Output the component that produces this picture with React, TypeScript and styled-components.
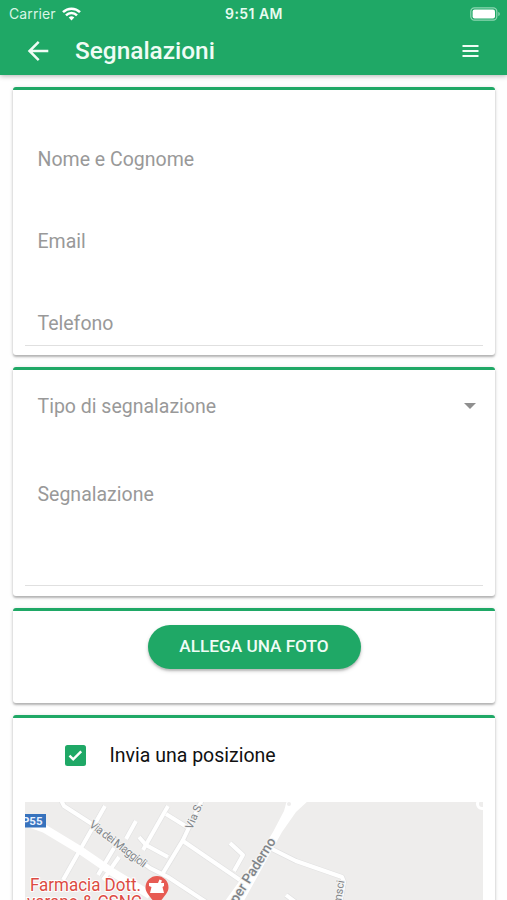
import React from 'react';
import styled, { createGlobalStyle } from 'styled-components';

const GREEN = '#1fa866';

const GlobalStyle = createGlobalStyle`
  * { box-sizing: border-box; }
  html, body { margin: 0; background: #fefefe; }
  body { height: 900px; overflow: hidden; font-family: Roboto, sans-serif; }
`;

const Screen = styled.div`
  width: 507px;
  height: 900px;
  overflow: hidden;
  display: flex;
  flex-direction: column;
`;

const Header = styled.header`
  flex: none;
  height: 75px;
  background: ${GREEN};
  color: #fff;
  box-shadow: 0 1px 5px rgba(0, 0, 0, 0.3);
`;

const StatusBar = styled.div`
  height: 27px;
  display: grid;
  grid-template-columns: 1fr auto 1fr;
  align-items: center;
  padding: 0 7px 0 9px;
  font-family: Inter, sans-serif;
  font-size: 14px;
  line-height: 27px;
`;

const Carrier = styled.div`
  display: flex;
  align-items: center;
  gap: 6px;
  color: #d8f5e5;
  letter-spacing: 0.1px;
`;

const Clock = styled.div`
  font-weight: 600;
  font-size: 14px;
  letter-spacing: 0.45px;
  padding-right: 1px;
  color: #e8fbf0;
`;

const BatteryIcon = styled.svg`
  justify-self: end;
  display: block;
`;

const Toolbar = styled.div`
  height: 48px;
  display: flex;
  align-items: center;
  padding: 0 28px 0 27px;
`;

const Title = styled.h1`
  flex: 1;
  margin: 0 0 0 26px;
  font-size: 24.4px;
  line-height: 30px;
  font-weight: 500;
  color: #effcf5;
`;

const IconButton = styled.button`
  display: flex;
  padding: 0;
  border: 0;
  background: none;
  color: #effcf5;
`;

const Content = styled.main`
  padding: 12px 12px 0 13px;
  display: flex;
  flex-direction: column;
  gap: 12px;
`;

const Card = styled.section<{ $height: number }>`
  flex: none;
  height: ${(p) => p.$height}px;
  background: #fff;
  border-top: 3px solid ${GREEN};
  border-radius: 3px;
  padding: 0 12px;
  box-shadow: 0 2px 2px rgba(0, 0, 0, 0.22), 0 1px 4px rgba(0, 0, 0, 0.14);
`;

const Field = styled.label<{ $height: number; $top: number; $line?: boolean }>`
  display: flex;
  justify-content: space-between;
  height: ${(p) => p.$height}px;
  padding: ${(p) => p.$top}px 7px 0 12.5px;
  border-bottom: ${(p) => (p.$line ? '1px solid #e0e0e0' : '0')};
  font-size: 19.5px;
  line-height: 24px;
  color: #999;
`;

const Caret = styled.span`
  margin-top: 8px;
  width: 0;
  height: 0;
  border: 6px solid transparent;
  border-top-color: #8f8f8f;
  border-bottom: 0;
`;

const Actions = styled.div`
  display: flex;
  justify-content: center;
  padding-top: 14px;
`;

const PillButton = styled.button`
  width: 213px;
  height: 44px;
  padding: 0 0 1px;
  border: 0;
  border-radius: 22px;
  background: ${GREEN};
  color: #effcf5;
  font: 500 17.2px/43px Roboto, sans-serif;
  box-shadow: 0 2px 2px rgba(0, 0, 0, 0.16), 0 2px 4px rgba(0, 0, 0, 0.16);
`;

const CheckRow = styled.label`
  height: 84px;
  display: flex;
  align-items: center;
  gap: 24px;
  padding: 0 0 9px 40px;
  font-size: 19.5px;
  color: #111;
`;

const CheckBox = styled.span`
  width: 20.5px;
  height: 20.5px;
  border-radius: 2.5px;
  background: ${GREEN};
  display: flex;
`;

const MapView = styled.svg`
  display: block;
  background: #eeedec;
`;

const thinRoads = [
  'M61 800L64 806L92 824L150 868L168 877L206 902',
  'M105 806L80 850L63 880',
  'M136 821L126 839',
  'M168 806L143 850',
  'M166 814L187 827',
  'M139 837L146 845L168 857',
  'M202 800L183 840L163 873',
  'M183 841L240 880',
  'M230 843L243 855L234 871',
  'M114 848L98 875',
  'M119 857L103 880',
  'M272 849L296 861L342 877L344 882L340 904',
  'M286 895L298 904',
];

function App() {
  return (
    <Screen>
      <GlobalStyle />
      <Header>
        <StatusBar>
          <Carrier>
            Carrier
            <svg width="19" height="14" viewBox="0 0 19 14" fill="none" stroke="#fff" strokeWidth="2.5">
              <path d="M1 5.1a12.2 12.2 0 0 1 17 0" />
              <path d="M4 8.3a7.8 7.8 0 0 1 11 0" />
              <path d="M6.7 10.5a4 4 0 0 1 5.6 0L9.5 13.6z" fill="#fff" stroke="none" />
            </svg>
          </Carrier>
          <Clock>9:51 AM</Clock>
          <BatteryIcon width="30" height="14" viewBox="0 0 30 14">
            <rect x="0.8" y="0.8" width="26" height="12.4" rx="3.6" fill="none" stroke="#8fd6b3" strokeWidth="1.2" />
            <rect x="2.6" y="2.6" width="22.4" height="8.8" rx="2" fill="#fff" />
            <path d="M28.3 5v4c1-.4 1.5-1.2 1.5-2s-.5-1.6-1.5-2z" fill="#8fd6b3" />
          </BatteryIcon>
        </StatusBar>
        <Toolbar>
          <IconButton aria-label="Indietro">
            <svg width="22" height="22" viewBox="0 0 22 22" fill="none" stroke="currentColor" strokeWidth="2.5">
              <path d="M21.3 11H3M11.7 1.8L2.5 11l9.2 9.2" />
            </svg>
          </IconButton>
          <Title>Segnalazioni</Title>
          <IconButton aria-label="Menu">
            <svg width="17" height="12" viewBox="0 0 17 12" stroke="currentColor" strokeWidth="2">
              <path d="M0.5 1H16.5M0.5 6H16.5M0.5 11H16.5" />
            </svg>
          </IconButton>
        </Toolbar>
      </Header>
      <Content>
        <Card $height={268}>
          <Field $height={90} $top={58}>Nome e Cognome</Field>
          <Field $height={82} $top={50}>Email</Field>
          <Field $height={84} $top={50} $line>Telefono</Field>
        </Card>
        <Card $height={229}>
          <Field $height={74} $top={25}>
            Tipo di segnalazione
            <Caret />
          </Field>
          <Field $height={142} $top={39} $line>Segnalazione</Field>
        </Card>
        <Card $height={95}>
          <Actions>
            <PillButton>ALLEGA UNA FOTO</PillButton>
          </Actions>
        </Card>
        <Card $height={240}>
          <CheckRow>
            <CheckBox>
              <svg width="21" height="21" viewBox="0 0 21 21" fill="none" stroke="#fff" strokeWidth="2.5">
                <path d="M4.6 10.6l3.8 3.8L16.6 6.2" />
              </svg>
            </CheckBox>
            Invia una posizione
          </CheckRow>
          <MapView width="458" height="141" viewBox="25 802 458 141" fontFamily="Roboto, sans-serif">
            <g fill="none" stroke="#e2e2e2" strokeWidth="5.4" strokeLinejoin="round">
              {thinRoads.map((d) => <path key={d} d={d} />)}
            </g>
            <g fill="none" stroke="#fff" strokeWidth="4" strokeLinejoin="round">
              {thinRoads.map((d) => <path key={d} d={d} />)}
            </g>
            <path d="M20 820L45 829L80 850L112 872L150 895" fill="none" stroke="#fff" strokeWidth="8" />
            <path d="M287 800H309L296 812L282 832L272 850L240 908H220L262 850L273 832L284 811Z" fill="#fff" />
            <circle cx="289" cy="804" r="2" fill="#eeedec" />
            <circle cx="482" cy="804" r="4.5" fill="none" stroke="#fff" strokeWidth="3" />
            <rect x="20" y="814" width="26" height="13.5" fill="#3672bd" />
            <text x="22" y="825" fontSize="11.5" fontWeight="700" fill="#e6f0ff" textLength="20.5">P55</text>
            <g fill="#808488" stroke="#f3f3f2" strokeWidth="2" paintOrder="stroke">
              <text transform="translate(88.5 826) rotate(37.5)" fontSize="11.5" textLength="69">Via dei Maggioli</text>
              <text transform="translate(192 830) rotate(-67)" fontSize="11">Via S. P</text>
              <text transform="translate(237 904) rotate(-58)" fontSize="14" fontWeight="500" textLength="74" lengthAdjust="spacingAndGlyphs">per Paderno</text>
              <text transform="translate(338 921) rotate(-81)" fontSize="11">Gramsci</text>
            </g>
            <g fill="#dc4b43" stroke="#fff" strokeWidth="2" paintOrder="stroke" fontSize="17.8">
              <text x="27" y="908" textLength="115" lengthAdjust="spacingAndGlyphs">varano &amp; CSNC</text>
              <text x="30" y="891" textLength="111" lengthAdjust="spacingAndGlyphs">Farmacia Dott.</text>
            </g>
            <path d="M157 876a11.5 11.5 0 0 1 11.5 11.5c0 7-8 11-11.5 20c-3.5-9-11.5-13-11.5-20A11.5 11.5 0 0 1 157 876z" fill="#e75b53" />
            <path d="M149 883h9l1.5-3.5 2.5 1-1 2.5h3v3l-1.5 1 1.5 6h-14l1.500-6-2.500-1z" fill="#fff" />
          </MapView>
        </Card>
      </Content>
    </Screen>
  );
}

export default App;
